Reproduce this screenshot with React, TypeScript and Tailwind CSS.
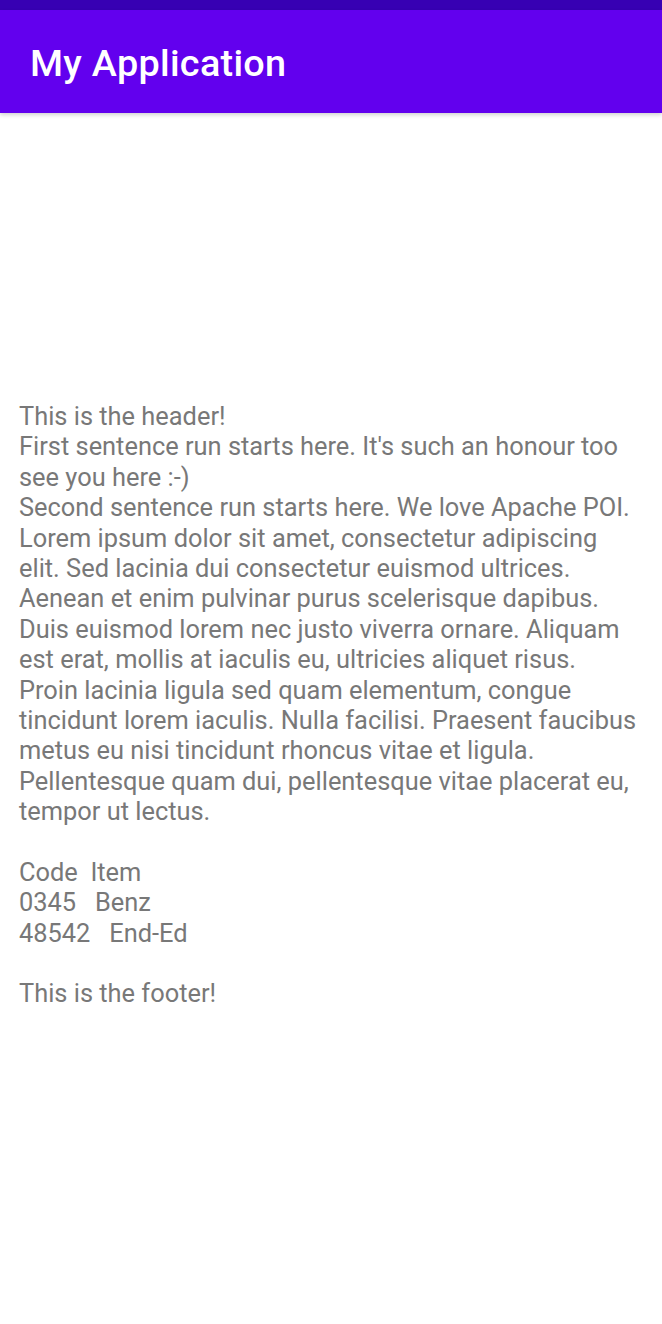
const BODY_LINES = [
  "This is the header!",
  "First sentence run starts here. It's such an honour too",
  "see you here :-)",
  "Second sentence run starts here. We love Apache POI.",
  "Lorem ipsum dolor sit amet, consectetur adipiscing",
  "elit. Sed lacinia dui consectetur euismod ultrices.",
  "Aenean et enim pulvinar purus scelerisque dapibus.",
  "Duis euismod lorem nec justo viverra ornare. Aliquam",
  "est erat, mollis at iaculis eu, ultricies aliquet risus.",
  "Proin lacinia ligula sed quam elementum, congue",
  "tincidunt lorem iaculis. Nulla facilisi. Praesent faucibus",
  "metus eu nisi tincidunt rhoncus vitae et ligula.",
  "Pellentesque quam dui, pellentesque vitae placerat eu,",
  "tempor ut lectus.",
  "",
  "Code  Item",
  "0345   Benz",
  "48542   End-Ed",
  "",
  "This is the footer!",
];

export default function App() {
  const font = { fontFamily: "Roboto, 'Noto Sans', sans-serif" };
  return (
    <div className="flex min-h-screen w-full flex-col bg-white" style={font}>
      <div className="h-[10px] w-full bg-[#3700b3]" />
      <header className="relative z-10 flex h-[103px] items-center bg-[#6200ee] px-[30px] pt-[4px] shadow-[0_2px_4px_rgba(0,0,0,0.18)]">
        <h1 className="text-[37.8px] font-medium leading-none tracking-[0.3px] text-white">My Application</h1>
      </header>
      <main className="flex-1 px-[19px] pt-[288px]">
        <div className="text-[25.4px] leading-[30.4px] text-[#787878]">
          {BODY_LINES.map((line, i) => (
            <p key={i} className="h-[30.4px] whitespace-pre">
              {line}
            </p>
          ))}
        </div>
      </main>
    </div>
  );
}
